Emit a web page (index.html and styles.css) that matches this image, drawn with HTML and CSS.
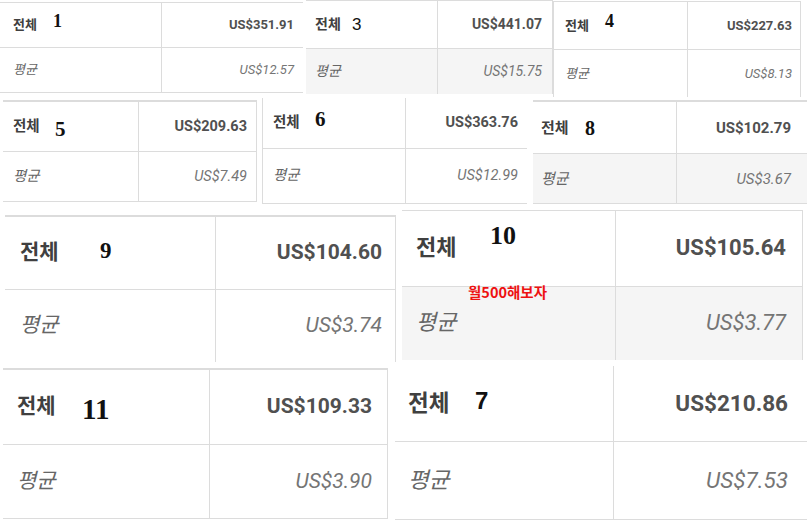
FILE: index.html
```html
<!DOCTYPE html>
<html lang="ko">
<head>
<meta charset="utf-8">
<title>수익 합계</title>
<link rel="stylesheet" href="styles.css">
</head>
<body>
<div class="row r1">
  <div class="tile t1">
    <div class="cell lab">전체</div><div class="cell amt">US$351.91</div>
    <div class="cell lab avg">평균</div><div class="cell amt avg">US$12.57</div>
    <span class="tag serif">1</span>
  </div>
  <div class="tile t3 gray">
    <div class="cell lab">전체</div><div class="cell amt">US$441.07</div>
    <div class="cell lab avg">평균</div><div class="cell amt avg">US$15.75</div>
    <span class="tag sans">3</span>
  </div>
  <div class="tile t4">
    <div class="cell lab">전체</div><div class="cell amt">US$227.63</div>
    <div class="cell lab avg">평균</div><div class="cell amt avg">US$8.13</div>
    <span class="tag serif">4</span>
  </div>
</div>
<div class="row r2">
  <div class="tile t5">
    <div class="cell lab">전체</div><div class="cell amt">US$209.63</div>
    <div class="cell lab avg">평균</div><div class="cell amt avg">US$7.49</div>
    <span class="tag serif">5</span>
  </div>
  <div class="tile t6">
    <div class="cell lab">전체</div><div class="cell amt">US$363.76</div>
    <div class="cell lab avg">평균</div><div class="cell amt avg">US$12.99</div>
    <span class="tag serif">6</span>
  </div>
  <div class="tile t8 gray">
    <div class="cell lab">전체</div><div class="cell amt">US$102.79</div>
    <div class="cell lab avg">평균</div><div class="cell amt avg">US$3.67</div>
    <span class="tag serif">8</span>
  </div>
</div>
<div class="row r3">
  <div class="tile t9">
    <div class="cell lab">전체</div><div class="cell amt">US$104.60</div>
    <div class="cell lab avg">평균</div><div class="cell amt avg">US$3.74</div>
    <span class="tag serif">9</span>
  </div>
  <div class="tile t10 gray">
    <div class="cell lab">전체</div><div class="cell amt">US$105.64</div>
    <div class="cell lab avg">평균</div><div class="cell amt avg">US$3.77</div>
    <span class="tag serif">10</span>
    <span class="note">월500해보자</span>
  </div>
</div>
<div class="row r4">
  <div class="tile t11">
    <div class="cell lab">전체</div><div class="cell amt">US$109.33</div>
    <div class="cell lab avg">평균</div><div class="cell amt avg">US$3.90</div>
    <span class="tag serif">11</span>
  </div>
  <div class="tile t7">
    <div class="cell lab">전체</div><div class="cell amt">US$210.86</div>
    <div class="cell lab avg">평균</div><div class="cell amt avg">US$7.53</div>
    <span class="tag sans bold">7</span>
  </div>
</div>
</body>
</html>
```
FILE: styles.css
```css
* { box-sizing: border-box; }

body {
  margin: 0;
  width: 807px;
  height: 530px;
  overflow: hidden;
  background: #ffffff;
  font-family: Roboto, "Noto Sans CJK KR", sans-serif;
}

.row { display: flex; align-items: flex-start; }
.r1 { height: 97px; }
.r2 { height: 110px; }
.r3 { height: 159px; }
.r4 { height: 164px; }

.tile {
  position: relative;
  display: grid;
  grid-template-columns: var(--c1) 1fr;
  grid-template-rows: var(--h1) var(--h2);
  width: var(--w);
  margin-left: var(--ml);
  margin-top: var(--mt);
  font-size: var(--fs);
  color: #3a3a3a;
  border-style: solid;
  border-color: #dcdcdc;
  border-width: var(--bt) var(--br) var(--bb) var(--bl);
  --bt: 0; --br: 0; --bb: 0; --bl: 0;
}

.cell { display: flex; align-items: center; line-height: 1.2; }
.lab {
  padding-left: var(--pl);
  font-weight: 700;
  border-right: 1px solid #dcdcdc;
  color: #404040;
}
.amt {
  justify-content: flex-end;
  padding-right: var(--pr);
  font-weight: 700;
  color: #505050;
}
.avg {
  font-style: italic;
  font-weight: 400;
  color: #666;
  border-top: 1px solid #dcdcdc;
}
.amt.avg { color: #757575; }
.gray .avg { background: #f5f5f5; }

.tag {
  position: absolute;
  line-height: 1;
  color: #111;
  font-size: var(--ts);
  left: var(--tx);
  top: var(--ty);
}
.serif { font-family: "Liberation Serif", serif; font-weight: 700; }
.sans { font-family: "Liberation Sans", sans-serif; font-weight: 400; }
.sans.bold { font-weight: 700; }

.note {
  position: absolute;
  left: 66px;
  top: 74px;
  line-height: 1;
  font-size: 14.5px;
  font-weight: 700;
  color: #ee1111;
  font-family: "Noto Sans CJK KR", sans-serif;
}

.t1 { --ml: 0px; --mt: 2px; --w: 303px; --c1: 162px; --h1: 44px; --h2: 45px; --bt: 1px; --bb: 1px; --fs: 13px; --pl: 13px; --pr: 9px; --ts: 18px; --tx: 53px; --ty: 9px; }
.t3 { --ml: 3px; --mt: 0px; --w: 247px; --c1: 132px; --h1: 47px; --h2: 46px; --bt: 1px; --br: 1px; --fs: 14px; --pl: 9px; --pr: 10px; --ts: 17px; --tx: 46px; --ty: 15px; }
.t4 { --ml: 0px; --mt: 1px; --w: 248px; --c1: 134px; --h1: 47px; --h2: 48px; --bt: 1px; --br: 1px; --bl: 1px; --fs: 13px; --pl: 11px; --pr: 8px; --ts: 18px; --tx: 51px; --ty: 10px; }

.t5 { --ml: 3px; --mt: 3px; --w: 254px; --c1: 136px; --h1: 49px; --h2: 50px; --bt: 2px; --br: 1px; --bb: 1px; --fs: 14.5px; --pl: 10px; --pr: 9px; --ts: 21px; --tx: 52px; --ty: 17px; }
.t6 { --ml: 5px; --mt: 1px; --w: 265px; --c1: 143px; --h1: 50px; --h2: 55px; --bb: 1px; --bl: 1px; --fs: 14.5px; --pl: 10px; --pr: 9px; --ts: 21px; --tx: 52px; --ty: 11px; }
.t8 { --ml: 6px; --mt: 3px; --w: 274px; --c1: 144px; --h1: 51px; --h2: 50px; --bt: 2px; --bb: 1px; --fs: 15px; --pl: 8px; --pr: 16px; --ts: 20px; --tx: 52px; --ty: 16px; }

.t9 { --ml: 5px; --mt: 8px; --w: 391px; --c1: 211px; --h1: 72px; --h2: 73px; --bt: 2px; --br: 1px; --fs: 21px; --pl: 15px; --pr: 13px; --ts: 23px; --tx: 95px; --ty: 22px; }
.t10 { --ml: 6px; --mt: 3px; --w: 401px; --c1: 214px; --h1: 75px; --h2: 74px; --bt: 1px; --br: 1px; --fs: 22px; --pl: 14px; --pr: 16px; --ts: 26px; --tx: 88px; --ty: 12px; }

.t11 { --ml: 3px; --mt: 2px; --w: 385px; --c1: 207px; --h1: 74px; --h2: 74px; --bt: 2px; --br: 1px; --bb: 1px; --fs: 21px; --pl: 14px; --pr: 15px; --ts: 29px; --tx: 79px; --ty: 25px; }
.t7 { --ml: 7px; --mt: 0px; --w: 412px; --c1: 219px; --h1: 75px; --h2: 78px; --bb: 1px; --fs: 22.5px; --pl: 13px; --pr: 19px; --ts: 24px; --tx: 80px; --ty: 23px; }
```
